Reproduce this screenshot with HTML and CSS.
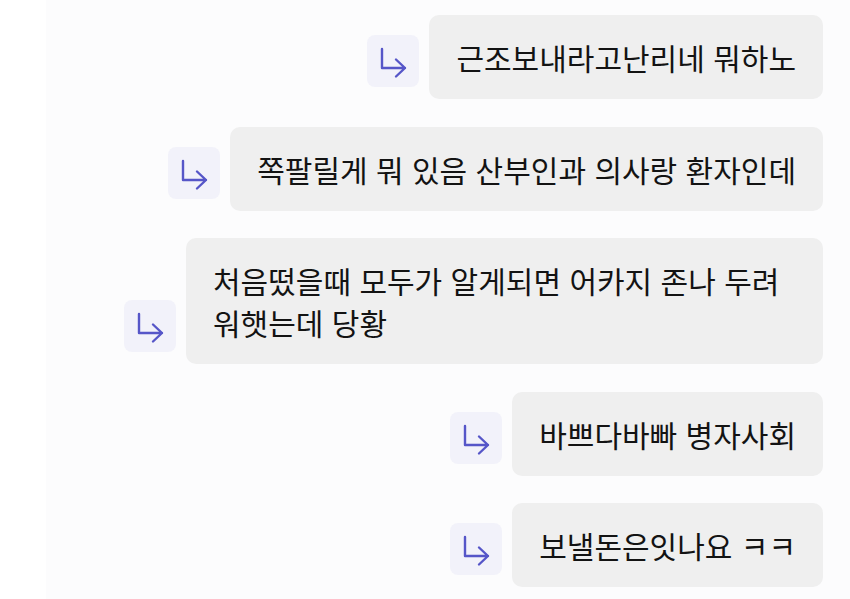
FILE: index.html
```html
<!DOCTYPE html>
<html lang="ko">
<head>
    <meta charset="UTF-8">
    <meta name="viewport" content="width=device-width, initial-scale=1.0">
    <title>답글</title>
    <link rel="stylesheet" href="styles.css">
</head>
<body>
    <div class="page">
        <div class="gutter"></div>
        <div class="thread">
            <div class="reply">
                <div class="reply-icon">
                    <svg viewBox="0 0 52 52" width="52" height="52"><path d="M15 14V33H38M29 24.5L38 33L29 41.5"/></svg>
                </div>
                <div class="bubble">근조보내라고난리네 뭐하노</div>
            </div>
            <div class="reply">
                <div class="reply-icon">
                    <svg viewBox="0 0 52 52" width="52" height="52"><path d="M15 14V33H38M29 24.5L38 33L29 41.5"/></svg>
                </div>
                <div class="bubble">쪽팔릴게 뭐 있음 산부인과 의사랑 환자인데</div>
            </div>
            <div class="reply">
                <div class="reply-icon">
                    <svg viewBox="0 0 52 52" width="52" height="52"><path d="M15 14V33H38M29 24.5L38 33L29 41.5"/></svg>
                </div>
                <div class="bubble">처음떴을때 모두가 알게되면 어카지 존나 두려워햇는데 당황</div>
            </div>
            <div class="reply">
                <div class="reply-icon">
                    <svg viewBox="0 0 52 52" width="52" height="52"><path d="M15 14V33H38M29 24.5L38 33L29 41.5"/></svg>
                </div>
                <div class="bubble">바쁘다바빠 병자사회</div>
            </div>
            <div class="reply">
                <div class="reply-icon">
                    <svg viewBox="0 0 52 52" width="52" height="52"><path d="M15 14V33H38M29 24.5L38 33L29 41.5"/></svg>
                </div>
                <div class="bubble">보낼돈은잇나요 ㅋㅋ</div>
            </div>
        </div>
    </div>
</body>
</html>
```

FILE: styles.css
```css
body {
    margin: 0;
    padding: 0;
    background-color: #fcfcfd;
    font-family: "Noto Sans CJK KR", "Noto Sans", sans-serif;
    color: #131313;
}

.page {
    display: flex;
    min-height: 599px;
}

.gutter {
    width: 46px;
    flex-shrink: 0;
    background-color: #fff;
}

.thread {
    flex: 1;
    display: flex;
    flex-direction: column;
    align-items: flex-end;
    gap: 27.5px;
    padding: 15px 27px 0 0;
}

.reply {
    display: flex;
    align-items: flex-end;
    gap: 10px;
}

.reply-icon {
    width: 52px;
    height: 52px;
    margin-bottom: 12px;
    flex-shrink: 0;
    border-radius: 8px;
    background-color: #f2f2fa;
}

.reply-icon svg {
    display: block;
    fill: none;
    stroke: #5656c8;
    stroke-width: 2.4;
    stroke-linecap: round;
    stroke-linejoin: round;
}

.bubble {
    max-width: 583px;
    padding: 21px 27px;
    border-radius: 10px;
    background-color: #efefef;
    font-size: 30px;
    line-height: 42px;
}
```
